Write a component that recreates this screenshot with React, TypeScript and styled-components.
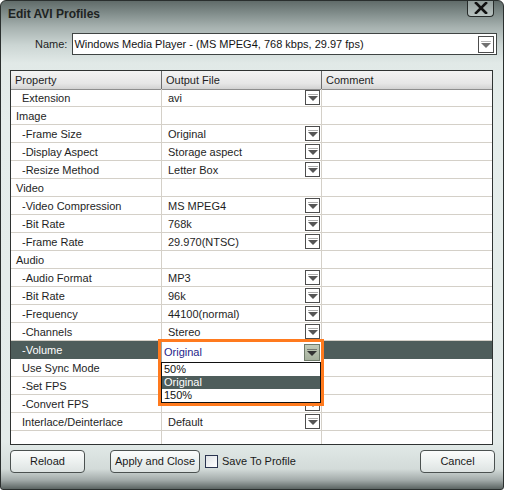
import React from 'react';
import styled, { createGlobalStyle } from 'styled-components';

const Global = createGlobalStyle`
  html, body { margin: 0; padding: 0; background: #ffffff; }
  body { font-family: "Liberation Sans", Arial, sans-serif; font-size: 11px; color: #1a1a1a; }
  * { box-sizing: border-box; }
`;

const Window = styled.div`
  width: 504px;
  height: 490px;
  border: 1px solid #2a2f2e;
  border-radius: 6px 6px 3px 3px;
  background: linear-gradient(
    to bottom,
    #606b69 0px,
    #808c8a 12px,
    #a6b1af 26px,
    #cbd5d3 44px,
    #e1e9e7 62px,
    #e5edeb 120px,
    #e3ebe9 440px,
    #d3dbd9 468px,
    #a3abaa 479px,
    #5b6462 488px
  );
  display: flex;
  flex-direction: column;
  overflow: hidden;
`;

const TitleBar = styled.div`
  height: 32px;
  display: flex;
  align-items: flex-start;
  padding: 0 9px 0 7px;
`;

const Title = styled.div`
  font-weight: bold;
  font-size: 12px;
  line-height: 14px;
  padding-top: 6px;
  color: #1e2322;
`;

const CloseButton = styled.div`
  margin-left: auto;
  margin-top: -1px;
  width: 27px;
  height: 17px;
  border: 1px solid #262a29;
  border-top: none;
  border-radius: 0 0 4px 4px;
  background: linear-gradient(to bottom, #8f9a98, #b9c3c1);
  display: flex;
  align-items: center;
  justify-content: center;
`;

const NameRow = styled.div`
  height: 22px;
  display: flex;
  align-items: center;
  padding-left: 34px;
  gap: 5px;
`;

const Label = styled.span`
  font-size: 11px;
  color: #1e1e1e;
`;

const Select = styled.div`
  width: 425px;
  height: 22px;
  border: 1px solid #3f4443;
  background: #ffffff;
  display: flex;
  align-items: center;
  padding: 0 2px 0 1px;
  font-size: 11px;
  color: #141414;
`;

const SelectText = styled.span`
  flex: 1;
  white-space: nowrap;
`;

const ArrowBox = styled.div<{ $w: number; $h: number; $active?: boolean }>`
  width: ${p => p.$w}px;
  height: ${p => p.$h}px;
  flex: none;
  border: 1px solid ${p => (p.$active ? '#6f7b6a' : '#4d4d4d')};
  background: ${p => (p.$active ? 'linear-gradient(#c2cbb9, #a6b19d)' : '#ffffff')};
  display: flex;
  align-items: center;
  justify-content: center;
  padding-top: 2px;
`;

const Tri = styled.div<{ $c?: string }>`
  width: 0;
  height: 0;
  border-left: 5px solid transparent;
  border-right: 5px solid transparent;
  border-top: 5px solid ${p => p.$c || '#555'};
  position: relative;
  &::before {
    content: '';
    position: absolute;
    left: -5px;
    top: -7px;
    width: 10px;
    height: 1px;
    background: ${p => p.$c || '#555'};
    opacity: 0.5;
  }
`;

const Table = styled.div`
  margin: 15px 0 0 9px;
  width: 483px;
  height: 375px;
  border: 1px solid #2f3332;
  background: #ffffff;
  display: flex;
  flex-direction: column;
`;

const cols = '151px 160px 1fr';

const HeaderRow = styled.div`
  display: grid;
  grid-template-columns: ${cols};
  height: 18px;
  flex: none;
`;

const HeaderCell = styled.div<{ $last?: boolean }>`
  background: linear-gradient(to bottom, #f3f3f3 0%, #e6e6e6 70%, #d2d2d2 100%);
  border-right: ${p => (p.$last ? 'none' : '1px solid #6c6c6c')};
  border-bottom: 1px solid #8e8e8e;
  padding-left: 4px;
  padding-top: 1px;
  line-height: 17px;
  color: #1e1e1e;
`;

const Row = styled.div<{ $sel?: boolean }>`
  display: grid;
  grid-template-columns: ${cols};
  height: 18px;
  flex: none;
  background: ${p => (p.$sel ? '#4e5d5b' : 'transparent')};
  color: ${p => (p.$sel ? '#ffffff' : '#1e1e1e')};
`;

const Cell = styled.div<{ $last?: boolean; $indent?: number; $sel?: boolean }>`
  position: relative;
  border-right: ${p => (p.$last ? 'none' : `1px solid ${p.$sel ? '#4e5d5b' : '#d4d0c8'}`)};
  border-bottom: 1px solid ${p => (p.$sel ? '#4e5d5b' : '#d4d0c8')};
  padding-left: ${p => p.$indent ?? 6}px;
  display: flex;
  align-items: center;
  white-space: nowrap;
`;

const CellText = styled.span`
  flex: 1;
`;

const Filler = styled.div`
  flex: 1;
  display: grid;
  grid-template-columns: ${cols};
`;

const FillerCell = styled.div<{ $last?: boolean }>`
  border-right: ${p => (p.$last ? 'none' : '1px solid #d4d0c8')};
`;

const Popup = styled.div`
  position: absolute;
  left: -4px;
  top: -2px;
  width: 166px;
  height: 67px;
  border: 3px solid #ff7a1e;
  z-index: 2;
  display: flex;
  flex-direction: column;
  background: #ffffff;
`;

const Combo = styled.div`
  height: 20px;
  flex: none;
  display: flex;
  align-items: center;
  background: #ffffff;
  border-left: 1px solid #9aa3a1;
  padding: 0 1px 0 2px;
  color: #1f1f8a;
`;

const List = styled.div`
  flex: 1;
  border: 1px solid #111111;
  display: flex;
  flex-direction: column;
`;

const Option = styled.div<{ $sel?: boolean }>`
  height: 13px;
  line-height: 13px;
  padding-left: 2px;
  background: ${p => (p.$sel ? '#4e5d5b' : '#ffffff')};
  color: ${p => (p.$sel ? '#ffffff' : '#111111')};
`;

const Footer = styled.div`
  margin-top: 5px;
  height: 22px;
  display: flex;
  align-items: center;
  padding: 0 8px 0 9px;
`;

const Button = styled.div<{ $w: number; $ml?: number; $auto?: boolean }>`
  width: ${p => p.$w}px;
  height: 23px;
  margin-left: ${p => (p.$auto ? 'auto' : `${p.$ml ?? 0}px`)};
  border: 1px solid #4b5150;
  border-radius: 4px;
  background: linear-gradient(to bottom, #fbfcfc 0%, #eef2f1 45%, #dde3e2 100%);
  display: flex;
  align-items: center;
  justify-content: center;
  font-size: 11px;
  color: #1a1a1a;
`;

const Check = styled.div`
  width: 13px;
  height: 13px;
  margin-left: 5px;
  border: 1px solid #2b3550;
  background: linear-gradient(135deg, #dfe3e6, #ffffff);
`;

const CheckLabel = styled.span`
  margin-left: 4px;
  font-size: 11px;
  color: #1a1a1a;
`;

type R = { name: string; indent: number; value?: string; drop?: boolean; sel?: boolean };

const rows: R[] = [
  { name: 'Extension', indent: 11, value: 'avi', drop: true },
  { name: 'Image', indent: 5 },
  { name: '-Frame Size', indent: 11, value: 'Original', drop: true },
  { name: '-Display Aspect', indent: 11, value: 'Storage aspect', drop: true },
  { name: '-Resize Method', indent: 11, value: 'Letter Box', drop: true },
  { name: 'Video', indent: 5 },
  { name: '-Video Compression', indent: 11, value: 'MS MPEG4', drop: true },
  { name: '-Bit Rate', indent: 11, value: '768k', drop: true },
  { name: '-Frame Rate', indent: 11, value: '29.970(NTSC)', drop: true },
  { name: 'Audio', indent: 5 },
  { name: '-Audio Format', indent: 11, value: 'MP3', drop: true },
  { name: '-Bit Rate', indent: 11, value: '96k', drop: true },
  { name: '-Frequency', indent: 11, value: '44100(normal)', drop: true },
  { name: '-Channels', indent: 11, value: 'Stereo', drop: true },
  { name: '-Volume', indent: 11, sel: true },
  { name: 'Use Sync Mode', indent: 11, value: '', drop: true },
  { name: '-Set FPS', indent: 11, value: '', drop: true },
  { name: '-Convert FPS', indent: 11, value: '', drop: true },
  { name: 'Interlace/Deinterlace', indent: 11, value: 'Default', drop: true },
];

const CloseX = () => (
  <svg width="14" height="12" viewBox="0 0 14 12">
    <path d="M2 1 L12 11 M12 1 L2 11" stroke="#111" strokeWidth="2.6" strokeLinecap="square" />
  </svg>
);

export default function App() {
  return (
    <>
      <Global />
      <Window>
        <TitleBar>
          <Title>Edit AVI Profiles</Title>
          <CloseButton>
            <CloseX />
          </CloseButton>
        </TitleBar>
        <NameRow>
          <Label>Name:</Label>
          <Select>
            <SelectText>Windows Media Player - (MS MPEG4, 768 kbps, 29.97 fps)</SelectText>
            <ArrowBox $w={16} $h={17}>
              <Tri $c="#707070" />
            </ArrowBox>
          </Select>
        </NameRow>
        <Table>
          <HeaderRow>
            <HeaderCell>Property</HeaderCell>
            <HeaderCell>Output File</HeaderCell>
            <HeaderCell $last>Comment</HeaderCell>
          </HeaderRow>
          {rows.map((r, i) => (
            <Row key={i} $sel={r.sel}>
              <Cell $indent={r.indent} $sel={r.sel}>{r.name}</Cell>
              <Cell $indent={6} $sel={r.sel}>
                {r.sel ? (
                  <Popup>
                    <Combo>
                      <CellText>Original</CellText>
                      <ArrowBox $w={16} $h={17} $active>
                        <Tri $c="#333" />
                      </ArrowBox>
                    </Combo>
                    <List>
                      <Option>50%</Option>
                      <Option $sel>Original</Option>
                      <Option>150%</Option>
                    </List>
                  </Popup>
                ) : (
                  <>
                    <CellText>{r.value}</CellText>
                    {r.drop && (
                      <ArrowBox $w={15} $h={15} style={{ marginRight: 1 }}>
                        <Tri />
                      </ArrowBox>
                    )}
                  </>
                )}
              </Cell>
              <Cell $last $sel={r.sel} />
            </Row>
          ))}
          <Filler>
            <FillerCell />
            <FillerCell />
            <FillerCell $last />
          </Filler>
        </Table>
        <Footer>
          <Button $w={75}>Reload</Button>
          <Button $w={90} $ml={25}>Apply and Close</Button>
          <Check />
          <CheckLabel>Save To Profile</CheckLabel>
          <Button $w={75} $auto>Cancel</Button>
        </Footer>
      </Window>
    </>
  );
}
